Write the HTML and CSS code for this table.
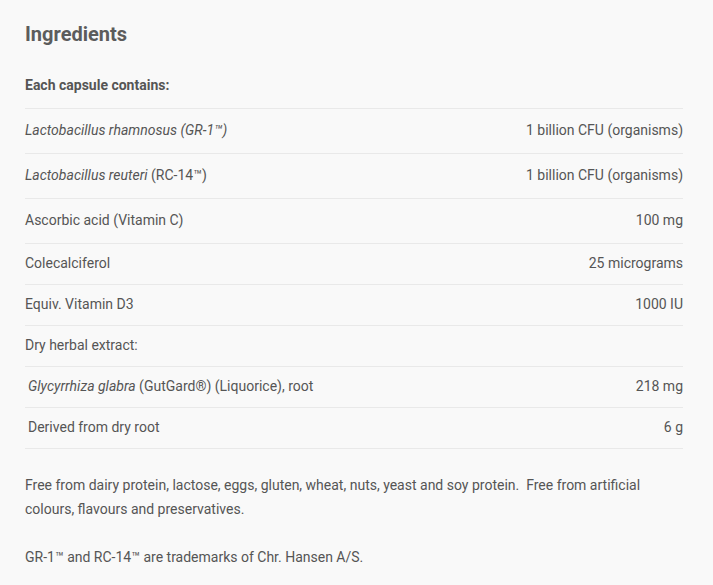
FILE: index.html
```html
<!DOCTYPE html>
<html>
<head>
<meta charset="utf-8">
<link rel="stylesheet" href="styles.css">
</head>
<body>
<section class="ingredients">
  <h2 class="title">Ingredients</h2>
  <p class="lead">Each capsule contains:</p>
  <div class="table">
    <div class="row tall"><span class="name"><em>Lactobacillus rhamnosus (GR-1™)</em></span><span class="amount">1 billion CFU (organisms)</span></div>
    <div class="row tall"><span class="name"><em>Lactobacillus reuteri</em> (RC-14™)</span><span class="amount">1 billion CFU (organisms)</span></div>
    <div class="row tall"><span class="name">Ascorbic acid (Vitamin C)</span><span class="amount">100 mg</span></div>
    <div class="row"><span class="name">Colecalciferol</span><span class="amount">25 micrograms</span></div>
    <div class="row"><span class="name">Equiv. Vitamin D3</span><span class="amount">1000 IU</span></div>
    <div class="row"><span class="name">Dry herbal extract:</span><span class="amount"></span></div>
    <div class="row"><span class="name indent"><em>Glycyrrhiza glabra</em> (GutGard®) (Liquorice), root</span><span class="amount">218 mg</span></div>
    <div class="row last"><span class="name indent">Derived from dry root</span><span class="amount">6 g</span></div>
  </div>
  <p class="note">Free from dairy protein, lactose, eggs, gluten, wheat, nuts, yeast and soy protein.&nbsp; Free from artificial colours, flavours and preservatives.</p>
  <p class="note">GR-1™ and RC-14™ are trademarks of Chr. Hansen A/S.</p>
</section>
</body>
</html>
```

FILE: styles.css
```css
html, body {
  margin: 0;
  padding: 0;
  background: #f9f9f9;
}
body {
  font-family: Roboto, "Liberation Sans", sans-serif;
  color: #555555;
  font-size: 14px;
}
.ingredients {
  width: 658px;
  padding: 22px 25px 0 25px;
}
.title {
  margin: 0;
  font-size: 20px;
  line-height: 24px;
  font-weight: 700;
  color: #5c5c5c;
}
.lead {
  margin: 29px 0 0 0;
  font-weight: 700;
  line-height: 20px;
  padding-bottom: 13px;
  border-bottom: 1px solid #e9e9e9;
}
.table {
  display: flex;
  flex-direction: column;
}
.row {
  display: flex;
  justify-content: space-between;
  align-items: center;
  box-sizing: border-box;
  height: 41px;
  padding-bottom: 2px;
  border-bottom: 1px solid #e9e9e9;
  line-height: 19px;
}
.row.tall {
  height: 45px;
}
.indent {
  padding-left: 3px;
}
.note {
  margin: 24px 0 0 0;
  line-height: 24px;
  font-stretch: 94%;
}
```
